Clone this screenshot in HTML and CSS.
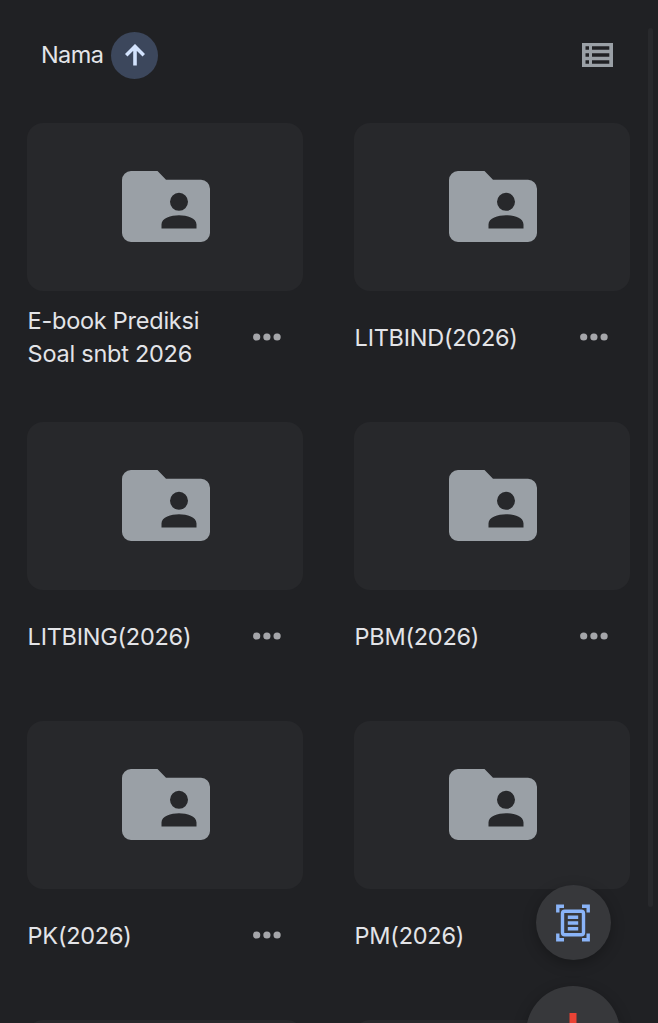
FILE: index.html
```html
<!DOCTYPE html>
<html lang="id">

<head>
    <meta charset="UTF-8">
    <meta name="viewport" content="width=device-width, initial-scale=1.0">
    <title>Folder</title>
    <link rel="stylesheet" href="styles.css">
</head>

<body>

    <svg class="sprite" aria-hidden="true">
        <symbol id="icon-folder" viewBox="0 0 88 71">
            <path fill-rule="evenodd" d="M9 0H35.5L44 8.8H79A9 9 0 0 1 88 17.8V62A9 9 0 0 1 79 71H9A9 9 0 0 1 0 62V9A9 9 0 0 1 9 0ZM57 21.8A9 9 0 1 0 57 39.8A9 9 0 1 0 57 21.8ZM39.5 57.5H74.5V53.5C74.5 47 65 44.2 57 44.2S39.5 47 39.5 53.5Z"/>
        </symbol>
        <symbol id="icon-more" viewBox="0 0 28 8">
            <circle cx="3.7" cy="4" r="3.6"/>
            <circle cx="13.9" cy="4" r="3.6"/>
            <circle cx="24.1" cy="4" r="3.6"/>
        </symbol>
    </svg>

    <header class="toolbar">
        <span class="sort-label">Nama</span>
        <button class="sort-button" aria-label="Urutkan">
            <svg width="20" height="22" viewBox="0 0 20 22">
                <path d="M10 21.5V2.5M1.2 11.3L10 2.5L18.8 11.3"/>
            </svg>
        </button>
        <button class="view-button" aria-label="Tampilan daftar">
            <svg width="31" height="24" viewBox="0 0 31 24">
                <path fill-rule="evenodd" d="M0 0H31V24H0ZM3.5 3.2V6.7H7V3.2ZM10 3.2V6.7H27.3V3.2ZM3.5 10.2V13.7H7V10.2ZM10 10.2V13.7H27.3V10.2ZM3.5 17.2V20.7H7V17.2ZM10 17.2V20.7H27.3V17.2Z"/>
            </svg>
        </button>
    </header>

    <main class="grid">
        <div class="item">
            <div class="card"><svg class="folder"><use href="#icon-folder"/></svg></div>
            <div class="info">
                <span class="name">E-book Prediksi<br>Soal snbt 2026</span>
                <svg class="more"><use href="#icon-more"/></svg>
            </div>
        </div>
        <div class="item">
            <div class="card"><svg class="folder"><use href="#icon-folder"/></svg></div>
            <div class="info">
                <span class="name">LITBIND(2026)</span>
                <svg class="more"><use href="#icon-more"/></svg>
            </div>
        </div>
        <div class="item">
            <div class="card"><svg class="folder"><use href="#icon-folder"/></svg></div>
            <div class="info">
                <span class="name">LITBING(2026)</span>
                <svg class="more"><use href="#icon-more"/></svg>
            </div>
        </div>
        <div class="item">
            <div class="card"><svg class="folder"><use href="#icon-folder"/></svg></div>
            <div class="info">
                <span class="name">PBM(2026)</span>
                <svg class="more"><use href="#icon-more"/></svg>
            </div>
        </div>
        <div class="item">
            <div class="card"><svg class="folder"><use href="#icon-folder"/></svg></div>
            <div class="info">
                <span class="name">PK(2026)</span>
                <svg class="more"><use href="#icon-more"/></svg>
            </div>
        </div>
        <div class="item">
            <div class="card"><svg class="folder"><use href="#icon-folder"/></svg></div>
            <div class="info">
                <span class="name">PM(2026)</span>
                <svg class="more"><use href="#icon-more"/></svg>
            </div>
        </div>
        <div class="card"></div>
        <div class="card"></div>
    </main>

    <div class="scrollbar"></div>

    <div class="actions">
        <button class="fab scan" aria-label="Pindai">
            <svg width="34" height="38" viewBox="0 0 34 38">
                <path class="line" d="M1.8 8.5V2.2H8M26 2.2H32.2V8.5M32.2 29.5V35.8H26M8 35.8H1.8V29.5"/>
                <rect class="line" x="6.5" y="7.2" width="21" height="23.6" rx="2.2"/>
                <path class="text-line" d="M11.8 13.3H22.2M11.8 19H22.2M11.8 24.7H22.2"/>
            </svg>
        </button>
        <button class="fab add" aria-label="Tambah">
            <svg width="40" height="40" viewBox="0 0 40 40">
                <path fill="#ea4335" d="M16.5 0H23.5V16.5H16.5Z"/>
                <path fill="#4285f4" d="M23.5 16.5H40V23.5H16.5Z"/>
                <path fill="#34a853" d="M16.5 23.5H23.5V40H16.5Z"/>
                <path fill="#fbbc04" d="M0 16.5H23.5L16.5 23.5H0Z"/>
            </svg>
        </button>
    </div>

</body>

</html>
```
FILE: styles.css
```css
* {
    box-sizing: border-box;
}

html {
    height: 1023px;
    overflow: hidden;
}

body {
    margin: 0;
    height: 1023px;
    position: relative;
    overflow: hidden;
    background-color: #202124;
    color: #e3e4e8;
    font-family: Inter, "Liberation Sans", sans-serif;
    font-size: 23.5px;
}

button {
    display: flex;
    align-items: center;
    justify-content: center;
    padding: 0;
    border: none;
    background: none;
}

svg {
    display: block;
    flex-shrink: 0;
}

.sprite {
    position: absolute;
    width: 0;
    height: 0;
}

.toolbar {
    display: flex;
    align-items: center;
    height: 123px;
    padding: 0 45px 13px 41px;
}

.sort-label {
    line-height: 32px;
    width: 70px;
    letter-spacing: -0.6px;
}

.sort-button {
    width: 47px;
    height: 47px;
    border-radius: 50%;
    background-color: #3c475c;
}

.sort-button path {
    fill: none;
    stroke: #d3e3fd;
    stroke-width: 3.6;
}

.view-button {
    margin-left: auto;
}

.view-button path {
    fill: #9aa0a6;
}

.grid {
    display: grid;
    grid-template-columns: 276px 276px;
    column-gap: 51px;
    row-gap: 39px;
    padding-left: 27px;
}

.card {
    display: flex;
    align-items: center;
    justify-content: center;
    height: 168px;
    padding: 0 0 1px 2px;
    border-radius: 16px;
    background-color: #27282b;
}

.folder {
    width: 88px;
    height: 71px;
    fill: #9aa0a6;
}

.info {
    display: flex;
    align-items: center;
    justify-content: space-between;
    height: 92px;
    padding-right: 22px;
    padding-left: 0.6px;
}

.name {
    line-height: 33px;
    letter-spacing: -0.25px;
    white-space: nowrap;
}

.more {
    width: 28px;
    height: 8px;
    fill: #a5a6aa;
}

.scrollbar {
    position: absolute;
    top: 28px;
    left: 648px;
    width: 5px;
    height: 879px;
    border-radius: 3px;
    background-color: #28292c;
}

.actions {
    position: absolute;
    top: 885px;
    left: 526px;
    width: 94px;
    height: 138px;
    overflow: visible;
    display: flex;
    flex-direction: column;
    align-items: center;
    gap: 26px;
}

.fab {
    flex-shrink: 0;
    border-radius: 50%;
    background-color: #37383b;
    box-shadow: 0 4px 14px rgba(0, 0, 0, 0.28);
}

.scan {
    width: 75px;
    height: 75px;
}

.scan .line {
    fill: none;
    stroke: #8ab4f8;
    stroke-width: 3.4;
}

.scan .text-line {
    stroke: #8ab4f8;
    stroke-width: 3.4;
}

.add {
    width: 94px;
    height: 94px;
}
```
